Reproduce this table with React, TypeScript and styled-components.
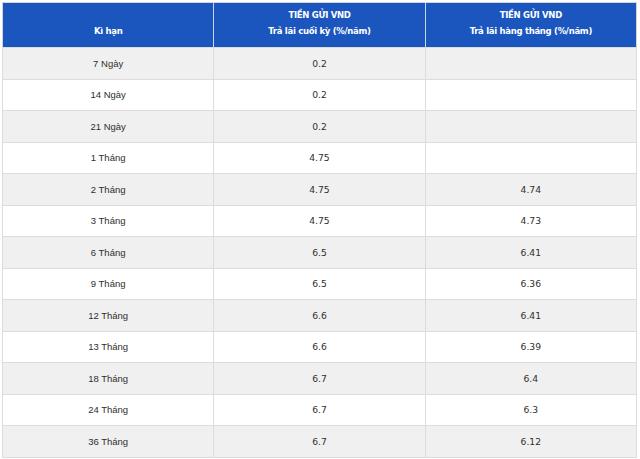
import React from 'react';
import styled, { createGlobalStyle } from 'styled-components';

const GlobalStyle = createGlobalStyle`
  html, body {
    margin: 0;
    padding: 0;
    background: #ffffff;
  }
  body {
    padding: 2px 3px 2px 2px;
  }
`;

const Table = styled.table`
  width: 635px;
  border-collapse: collapse;
  table-layout: fixed;
  border: 1px solid #d4d4d4;
`;

const HeadRow = styled.tr`
  height: 45px;
`;

const HeadCell = styled.th`
  box-sizing: border-box;
  background: #1a56be;
  color: #ffffff;
  font-family: "DejaVu Sans", sans-serif;
  font-weight: bold;
  font-size: 8.5px;
  letter-spacing: -0.3px;
  line-height: 16px;
  height: 45px;
  padding: 0 4px 8px;
  text-align: center;
  vertical-align: bottom;
  border-left: 1px solid #c9d5ee;
  &:first-child {
    border-left: none;
  }
`;

const Row = styled.tr<{ shaded: boolean }>`
  background: ${p => (p.shaded ? '#f0f0f0' : '#ffffff')};
  height: 31.5px;
`;

const Cell = styled.td<{ label?: boolean }>`
  border: 1px solid #dcdcdc;
  text-align: center;
  vertical-align: middle;
  color: #2e2e2e;
  padding: 0 4px;
  font-family: ${p => (p.label ? '"Liberation Sans", Arial' : '"DejaVu Sans"')}, sans-serif;
  font-size: ${p => (p.label ? '9.5px' : '9.2px')};
`;

const rates: [string, string, string][] = [
  ['7 Ngày', '0.2', ''],
  ['14 Ngày', '0.2', ''],
  ['21 Ngày', '0.2', ''],
  ['1 Tháng', '4.75', ''],
  ['2 Tháng', '4.75', '4.74'],
  ['3 Tháng', '4.75', '4.73'],
  ['6 Tháng', '6.5', '6.41'],
  ['9 Tháng', '6.5', '6.36'],
  ['12 Tháng', '6.6', '6.41'],
  ['13 Tháng', '6.6', '6.39'],
  ['18 Tháng', '6.7', '6.4'],
  ['24 Tháng', '6.7', '6.3'],
  ['36 Tháng', '6.7', '6.12'],
];

export default function App() {
  return (
    <>
      <GlobalStyle />
      <Table>
        <thead>
          <HeadRow>
            <HeadCell>Kì hạn</HeadCell>
            <HeadCell>
              TIỀN GỬI VND
              <br />
              Trả lãi cuối kỳ (%/năm)
            </HeadCell>
            <HeadCell>
              TIỀN GỬI VND
              <br />
              Trả lãi hàng tháng (%/năm)
            </HeadCell>
          </HeadRow>
        </thead>
        <tbody>
          {rates.map(([term, end, monthly], i) => (
            <Row key={term} shaded={i % 2 === 0}>
              <Cell label>{term}</Cell>
              <Cell>{end}</Cell>
              <Cell>{monthly}</Cell>
            </Row>
          ))}
        </tbody>
      </Table>
    </>
  );
}
